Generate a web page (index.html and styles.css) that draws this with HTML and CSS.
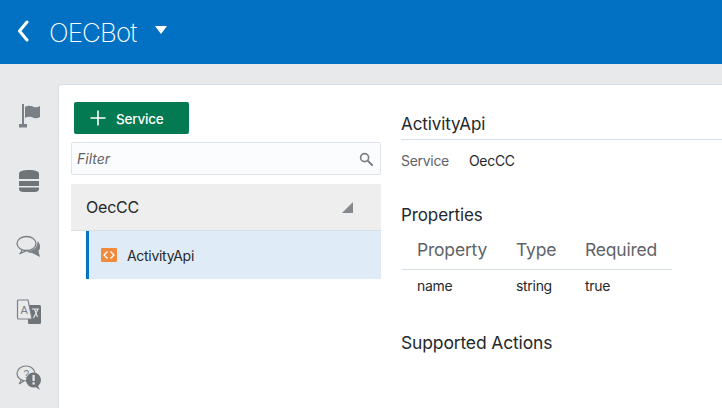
FILE: index.html
```html
<!DOCTYPE html>
<html lang="en">
<head>
<meta charset="utf-8">
<title>OECBot</title>
<link rel="stylesheet" href="styles.css">
</head>
<body>
<header class="topbar">
  <svg class="back" width="12" height="22" viewBox="0 0 12 22"><path d="M10 2 2.500 11l7.500 9" fill="none" stroke="#fff" stroke-width="3" stroke-linecap="round" stroke-linejoin="round"/></svg>
  <span class="brand">OECBot</span>
  <span class="caret"></span>
</header>
<div class="body">
  <nav class="rail">
    <svg width="24" height="26" viewBox="0 0 24 26"><path d="M5 1h2v20H5z" fill="#7b8086"/><path d="M2 21h8v3.500H2z" fill="#7b8086"/><path d="M8 4c3-2 6-1 9 0 2 .6 4 0 6-1v11c-2 1.200-4 1.600-6 1-3-1-6-2-9 0z" fill="#7b8086"/></svg>
    <svg width="20" height="22" viewBox="0 0 20 22"><path d="M0 9V4c0-3 4-4 10-4s10 1 10 4v5z" fill="#6f7479"/><path d="M0 11h20v5H0z" fill="#6f7479"/><path d="M0 17.500h20V19c0 2-2 3-4 3H4c-2 0-4-1-4-3z" fill="#6f7479"/></svg>
    <svg width="26" height="24" viewBox="0 0 26 24"><ellipse cx="10.500" cy="8.500" rx="9.500" ry="7" fill="none" stroke="#7b8086" stroke-width="1.300"/><path d="M6 15c0 1.500-1 3-2.500 4l7-3.300" fill="none" stroke="#7b8086" stroke-width="1.300"/><path d="M21.500 6c3 3 3.500 7 1 10l1.500 6-8-4c-2-.3-4-.3-5.500-1.500 5.500 0 11.500-3.500 11-10.500z" fill="#7b8086"/></svg>
    <svg width="26" height="26" viewBox="0 0 26 26"><rect x="12" y="6" width="13" height="19" rx="1.500" fill="#6f7479"/><path d="M2.500 1h9.500l4 19H2.500a1 1 0 0 1-1-1V2a1 1 0 0 1 1-1z" fill="#e8e9eb" stroke="#7b8086" stroke-width="1.200"/><text x="4.500" y="15" class="glyph">A</text><path d="M16 10h7M18.500 10l3 8M22 10l-4.500 9" fill="none" stroke="#e8e9eb" stroke-width="1.100"/></svg>
    <svg width="26" height="25" viewBox="0 0 26 25"><ellipse cx="10" cy="8.500" rx="9" ry="7.500" fill="none" stroke="#7b8086" stroke-width="1.200"/><path d="M5 15c0 2-1 3-2 4l5-3" fill="none" stroke="#7b8086" stroke-width="1.200"/><text x="7.500" y="13" class="glyph glyph-q">?</text><circle cx="17.500" cy="15" r="7.500" fill="#6f7479"/><path d="M18 21l6 4-3-6z" fill="#6f7479"/><path d="M16.500 10h2.200v6h-2.200zM16.500 17.300h2.200v2.200h-2.200z" fill="#e8e9eb"/></svg>
  </nav>
  <main class="card">
    <section class="left">
      <button class="add" type="button">
        <svg width="16" height="16" viewBox="0 0 16 16"><path d="M8 .5v15M.5 8h15" stroke="#fff" stroke-width="1.600"/></svg>
        <span>Service</span>
      </button>
      <div class="filter">
        <span>Filter</span>
        <svg width="14" height="14" viewBox="0 0 15 15"><circle cx="6" cy="6" r="4.300" fill="none" stroke="#7b8086" stroke-width="1.800"/><path d="M9.500 9.500 14 14" stroke="#7b8086" stroke-width="2.200" stroke-linecap="round"/></svg>
      </div>
      <div class="group">
        <span>OecCC</span>
        <i class="corner"></i>
      </div>
      <div class="item">
        <svg width="16" height="14" viewBox="0 0 16 14"><rect width="16" height="14" rx="1" fill="#f08a3c"/><path d="M6.500 3.500 3 7l3.500 3.500M9.500 3.500 13 7l-3.500 3.500" fill="none" stroke="#fff" stroke-width="1.300"/></svg>
        <span>ActivityApi</span>
      </div>
    </section>
    <section class="detail">
      <h1>ActivityApi</h1>
      <div class="meta"><span class="label">Service</span><span>OecCC</span></div>
      <h2 class="props">Properties</h2>
      <table>
        <thead><tr><th class="c1">Property</th><th class="c2">Type</th><th class="c3">Required</th></tr></thead>
        <tbody><tr><td>name</td><td>string</td><td>true</td></tr></tbody>
      </table>
      <h2 class="actions">Supported Actions</h2>
    </section>
  </main>
</div>
</body>
</html>
```
FILE: styles.css
```css
* { box-sizing: border-box; }
html, body { margin: 0; height: 100%; overflow: hidden; }
body {
  width: 722px; height: 408px;
  background: #e8e9eb;
  font-family: Inter, "Liberation Sans", sans-serif;
  color: #25282c;
  display: flex; flex-direction: column;
}
.topbar {
  height: 64px; flex: none;
  background: #0271c4;
  display: flex; align-items: center;
  padding-left: 17px;
  color: #fff;
}
.back { margin-top: -2px; }
.brand { font-size: 26px; font-weight: 200; margin-left: 20px; letter-spacing: -.9px; width: 90px; white-space: nowrap; }
.caret { width: 0; height: 0; border: 6px solid transparent; border-top: 8px solid #fff; border-bottom: 0; margin-top: -4px; margin-left: 16px; }
.body { flex: 1; display: flex; min-height: 0; }
.rail {
  width: 58px; flex: none;
  display: grid; grid-auto-rows: 65.500px; align-items: center; justify-items: center;
  padding-top: 19px;
  align-content: start;
}
.glyph { font-size: 11px; font-family: "Liberation Sans", sans-serif; fill: #7b8086; }
.glyph-q { font-size: 10px; }
.card {
  flex: 1;
  margin-top: 20px;
  background: #fff;
  border-top: 1px solid #d6dfe6;
  border-left: 1px solid #d6dfe6;
  border-top-left-radius: 3px;
  display: flex;
  padding-top: 17px;
  min-width: 0;
}
.left { width: 322px; flex: none; padding-left: 12px; }
.add {
  width: 115px; height: 32px;
  margin: 0 0 8px 3px; padding: 1px 0 0 16px;
  background: #047a52;
  border: 0; border-radius: 2px;
  display: flex; align-items: center; gap: 10px;
  color: #fff;
  font: 500 13.500px Inter, "Liberation Sans", sans-serif;
  letter-spacing: -.2px;
}
.add svg { margin-top: -2px; }
.filter {
  height: 33px;
  background: #fbfcfe;
  border: 1px solid #dfe4ea;
  border-radius: 2px;
  padding: 0 7px 0 5px;
  display: flex; align-items: center; justify-content: space-between;
  font-size: 14px; font-style: italic; color: #5f6368;
  margin-bottom: 9px;
}
.group {
  height: 47px;
  background: #eeeeee;
  border-bottom: 1px solid #d6dfe6;
  display: flex; align-items: center; justify-content: space-between;
  padding: 0 28px 0 15px;
  font-size: 16px;
  letter-spacing: -.2px;
}
.corner { width: 0; height: 0; border-left: 11px solid transparent; border-bottom: 11px solid #85888c; }
.item {
  height: 48px;
  margin-left: 15px;
  background: #dfecf7;
  border-left: 3px solid #0572c3;
  padding-left: 12px;
  display: flex; align-items: center; gap: 10px;
  font-size: 14px;
  letter-spacing: -.3px;
}
.detail { flex: 1; padding-left: 20px; min-width: 0; }
h1, h2 { font-weight: 400; margin: 0; font-size: 17px; letter-spacing: -.1px; }
h1 { height: 38px; padding-top: 12px; border-bottom: 1px solid #d6dfe6; }
.meta { display: flex; gap: 20px; font-size: 14px; letter-spacing: -.3px; margin-top: 12px; }
.label { color: #5f6368; }
.props { margin-top: 36px; }
table { border-collapse: collapse; margin-top: 9px; margin-left: 1px; width: 270px; table-layout: fixed; }
th { font-weight: 400; font-size: 17.500px; color: #5f6368; text-align: left; height: 35px; padding: 0 0 3px 15px; border-bottom: 1px solid #d6dfe6; letter-spacing: -.2px; }
.c1 { width: 99px; }
.c2 { width: 69px; }
td { font-size: 14px; padding: 7px 0 0 15px; letter-spacing: -.3px; }
.actions { margin-top: 38px; font-size: 17.500px; letter-spacing: -.15px; }
```
